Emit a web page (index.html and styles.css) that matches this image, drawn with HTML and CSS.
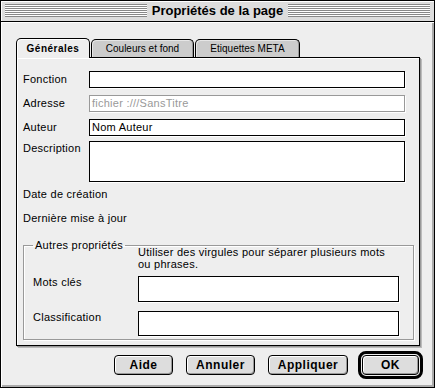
FILE: index.html
```html
<!DOCTYPE html>
<html lang="fr">
<head>
<meta charset="utf-8">
<title>Propriétés de la page</title>
<link rel="stylesheet" href="styles.css">
</head>
<body>
<div class="window">
  <div class="titlebar">
    <span class="stripes"></span>
    <span class="title">Propriétés de la page</span>
    <span class="stripes"></span>
  </div>
  <div class="content">
    <div class="tabs">
      <div class="tab tab-general active">Générales</div>
      <div class="tab tab-colors">Couleurs et fond</div>
      <div class="tab tab-meta">Etiquettes META</div>
    </div>
    <div class="panel">
      <div class="row row-gap7"><span class="label">Fonction</span><div class="field"></div></div>
      <div class="row row-gap7"><span class="label">Adresse</span><div class="field disabled">fichier :///SansTitre</div></div>
      <div class="row row-gap5"><span class="label">Auteur</span><div class="field">Nom Auteur</div></div>
      <div class="row row-desc"><span class="label label-top">Description</span><div class="field field-desc"></div></div>
      <div class="info info-first">Date de création</div>
      <div class="info">Dernière mise à jour</div>
      <fieldset class="group">
        <legend>Autres propriétés</legend>
        <p class="hint">Utiliser des virgules pour séparer plusieurs mots<br>ou phrases.</p>
        <div class="grow grow-keys"><span class="glabel">Mots clés</span><div class="field gfield"></div></div>
        <div class="grow grow-class"><span class="glabel">Classification</span><div class="field gfield"></div></div>
      </fieldset>
    </div>
    <div class="buttons">
      <div class="btn btn-help">Aide</div>
      <div class="btn btn-cancel">Annuler</div>
      <div class="btn btn-apply">Appliquer</div>
      <div class="default-ring"><div class="btn btn-ok">OK</div></div>
    </div>
  </div>
</div>
</body>
</html>
```

FILE: styles.css
```css
* { box-sizing: border-box; }
html, body { margin: 0; padding: 0; background: #fff; }
body {
  font-family: "Liberation Sans", Arial, sans-serif;
  font-size: 11px;
  color: #000;
}
.window {
  width: 435px;
  height: 388px;
  border: 1px solid #000;
  background: #eee;
  display: flex;
  flex-direction: column;
}
.titlebar {
  height: 21px;
  flex: none;
  border-bottom: 1px solid #000;
  background: #ddd;
  box-shadow: inset 1px 1px #fff;
  display: flex;
  align-items: flex-start;
  padding: 3px 4px 0 4px;
}
.stripes {
  flex: 1;
  height: 13px;
  background: repeating-linear-gradient(to bottom, #888 0 1px, #fff 1px 2px);
}
.title {
  font-weight: bold;
  font-size: 13px;
  line-height: 13px;
  padding: 0 5px;
  white-space: nowrap;
}
.content {
  flex: 1;
  padding: 16px 0 0 15px;
  box-shadow: inset 1px 1px #fff, inset -2px -2px #aaa;
}
.tabs {
  display: flex;
  gap: 1px;
  height: 19px;
  align-items: flex-end;
}
.tab {
  height: 18px;
  border: 1px solid #000;
  border-bottom: none;
  border-radius: 5px 5px 0 0;
  background: #ccc;
  box-shadow: inset 1px 1px #e6e6e6, inset -1px 0 #999;
  display: flex;
  align-items: center;
  justify-content: center;
  font-size: 10px;
  white-space: nowrap;
}
.tab-general { width: 74px; }
.tab-colors { width: 103px; }
.tab-meta { width: 105px; }
.tab.active {
  height: 20px;
  margin-bottom: -1px;
  background: #eee;
  box-shadow: inset 1px 1px #fff;
  position: relative;
  z-index: 1;
  font-weight: bold;
  letter-spacing: 0.5px;
}
.panel {
  width: 404px;
  border: 1px solid #000;
  box-shadow: inset 1px 1px #fff, 1px 1px 0 #999, 2px 2px 0 #bbb;
  padding: 13px 0 5px 6px;
  letter-spacing: 0.25px;
}
.row {
  display: flex;
  align-items: center;
  height: 17px;
}
.row-gap7 { margin-bottom: 7px; }
.row-gap5 { margin-bottom: 5px; }
.row-desc { height: 41px; align-items: flex-start; }
.label {
  width: 66px;
  flex: none;
  line-height: 17px;
}
.label-top { line-height: 14px; }
.field {
  width: 316px;
  height: 100%;
  background: #fff;
  border: 1px solid #000;
  box-shadow: 1px 1px 0 #fff;
  padding: 0 2px;
  line-height: 15px;
  white-space: nowrap;
}
.field.disabled {
  border-color: #999;
  color: #999;
}
.info {
  line-height: 14px;
  margin-top: 5px;
}
.info-first { margin-bottom: 10px; }
.info + .info { margin-top: 0; }
.group {
  width: 391px;
  margin: 19px 0 0 0;
  padding: 0 14px 3px 9px;
  border: 1px solid #999;
  box-shadow: 1px 1px 0 #fff, inset 1px 1px #fff;
  min-width: 0;
}
.group legend {
  padding: 0 2px;
  line-height: 2px;
  font-size: 11px;
}
.hint {
  margin: 0 0 6px 105px;
  line-height: 12px;
}
.grow {
  display: flex;
  align-items: flex-start;
}
.grow-keys { height: 26px; margin-bottom: 9px; }
.grow-class { height: 25px; }
.glabel {
  width: 105px;
  flex: none;
  line-height: 12px;
}
.gfield { width: 261px; }
.buttons {
  margin-top: 5px;
  padding-right: 11px;
  display: flex;
  justify-content: flex-end;
  align-items: center;
  gap: 13px;
}
.btn {
  height: 20px;
  border: 1px solid #000;
  border-radius: 4px;
  background: #ddd;
  box-shadow: inset 1px 1px #fff, inset -1px -1px #999;
  display: flex;
  align-items: center;
  justify-content: center;
  font-weight: bold;
  font-size: 12px;
  letter-spacing: 0.5px;
}
.btn-help { width: 59px; }
.btn-cancel { width: 69px; }
.btn-apply { width: 80px; }
.btn-ok { width: 57px; }
.default-ring {
  border: 3px solid #000;
  border-radius: 8px;
  padding: 1px;
  margin-left: -3px;
}
```
